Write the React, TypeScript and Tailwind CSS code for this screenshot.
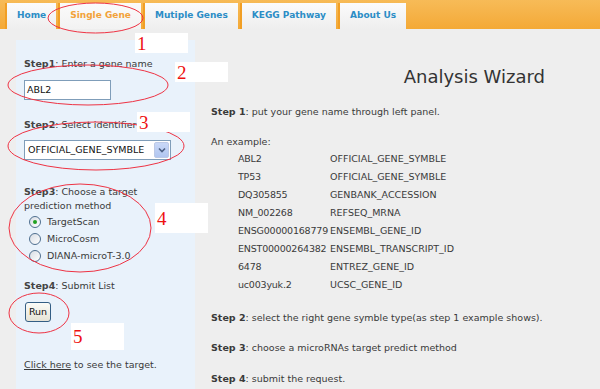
import React from 'react'

const tabs = [
  { label: 'Home', active: false },
  { label: 'Single Gene', active: true },
  { label: 'Mutiple Genes', active: false },
  { label: 'KEGG Pathway', active: false },
  { label: 'About Us', active: false },
]

const examples = [
  ['ABL2', 'OFFICIAL_GENE_SYMBLE'],
  ['TP53', 'OFFICIAL_GENE_SYMBLE'],
  ['DQ305855', 'GENBANK_ACCESSION'],
  ['NM_002268', 'REFSEQ_MRNA'],
  ['ENSG00000168779', 'ENSEMBL_GENE_ID'],
  ['ENST00000264382', 'ENSEMBL_TRANSCRIPT_ID'],
  ['6478', 'ENTREZ_GENE_ID'],
  ['uc003yuk.2', 'UCSC_GENE_ID'],
]

const methods = ['TargetScan', 'MicroCosm', 'DIANA-microT-3.0']

// red annotation numbers on white patches
const marks = [
  { n: '1', cls: 'left-[135px] top-[33px] w-[53px] h-[20px]' },
  { n: '2', cls: 'left-[175px] top-[62px] w-[53px] h-[20px]' },
  { n: '3', cls: 'left-[137px] top-[112px] w-[53px] h-[20px]' },
  { n: '4', cls: 'left-[155px] top-[203px] w-[53px] h-[30px]' },
  { n: '5', cls: 'left-[71px] top-[323px] w-[53px] h-[27px]' },
]

function Radio({ checked }: { checked: boolean }) {
  return (
    <span className="w-[12px] h-[12px] rounded-full border border-[#4f6f8f] bg-gradient-to-br from-[#d8dde4] to-white flex items-center justify-center">
      {checked && <span className="w-[4px] h-[4px] rounded-full bg-[#21a121]" />}
    </span>
  )
}

export default function App() {
  return (
    <div className="relative w-[600px] h-[389px] overflow-hidden bg-[#eeeeee] text-[#3a3a3a] font-['DejaVu_Sans',sans-serif] text-[9.5px]">
      {/* Header tabs */}
      <div className="h-[29px] bg-gradient-to-b from-[#f7bb57] to-[#f4a935] flex items-end pl-[5px] gap-[2px]">
        {tabs.map((t) => (
          <div
            key={t.label}
            className={`h-[26px] px-[10px] flex items-center border-l-2 border-[#f19f25] font-bold text-[9px] ${
              t.active
                ? 'bg-gradient-to-b from-[#fbfbfb] to-[#f2f2f2] text-[#f2a23a]'
                : 'bg-gradient-to-b from-[#fbfbfb] to-[#eeeeee] text-[#2b8dc6]'
            }`}
          >
            {t.label}
          </div>
        ))}
      </div>

      <div className="flex">
        {/* Left panel */}
        <div className="ml-[16px] mt-[11px] w-[179px] h-[349px] bg-[#e9f2fb] pl-[8px] pt-[17px] leading-[14px]">
          <div>
            <b className="text-[#444]">Step1</b>: Enter a gene name
          </div>
          <div className="mt-[9px] w-[87px] h-[20px] bg-white border border-[#7f9db9] flex items-center pl-[2px] text-[#111]">
            ABL2
          </div>
          <div className="mt-[18px]">
            <b className="text-[#444]">Step2</b>: Select identifier
          </div>
          <div className="mt-[8px] w-[147px] h-[20px] bg-white border border-[#7f9db9] flex items-center justify-between pl-[3px] pr-[1px] text-[#111]">
            <span>OFFICIAL_GENE_SYMBLE</span>
            <span className="w-[15px] h-[16px] rounded-[2px] bg-gradient-to-b from-[#c9d8f7] to-[#b1c6f0] border border-[#bcc9e6] flex items-center justify-center">
              <svg width="8" height="6" viewBox="0 0 8 6">
                <path d="M1 1.5 L4 4.5 L7 1.5" fill="none" stroke="#4d6185" strokeWidth="1.6" />
              </svg>
            </span>
          </div>
          <div className="mt-[25px]">
            <b className="text-[#444]">Step3</b>: Choose a target
            <br />
            prediction method
          </div>
          <div className="pl-[5px]">
            {methods.map((m, i) => (
              <div key={m} className="h-[17px] flex items-center gap-[6px]">
                <Radio checked={i === 0} />
                <span>{m}</span>
              </div>
            ))}
          </div>
          <div className="mt-[15px]">
            <b className="text-[#444]">Step4</b>: Submit List
          </div>
          <div className="mt-[9px] w-[26px] h-[20px] ml-px rounded-[3px] border border-[#345e84] bg-gradient-to-b from-[#fbfbf7] to-[#e6e3d6] flex items-center justify-center text-[#111]">
            Run
          </div>
          <div className="mt-[36px]">
            <span className="underline">Click here</span> to see the target.
          </div>
        </div>

        {/* Right content */}
        <div className="flex-1 pl-[16px] leading-[14px]">
          <div className="mt-[38px] pr-[55px] text-right text-[18px] leading-[20px] text-[#333]">
            Analysis Wizard
          </div>
          <div className="mt-[18px]">
            <b>Step 1</b>: put your gene name through left panel.
          </div>
          <div className="mt-[16px]">An example:</div>
          <div className="mt-[1px] pl-[27px]">
            {examples.map(([a, b]) => (
              <div key={a} className="h-[18px] flex items-center">
                <span className="w-[92px] whitespace-nowrap tracking-[-0.2px]">{a}</span>
                <span>{b}</span>
              </div>
            ))}
          </div>
          <div className="mt-[17px]">
            <b>Step 2</b>: select the right gene symble type(as step 1 example shows).
          </div>
          <div className="mt-[16px]">
            <b>Step 3</b>: choose a microRNAs target predict method
          </div>
          <div className="mt-[17px]">
            <b>Step 4</b>: submit the request.
          </div>
        </div>
      </div>

      {/* Annotation ellipses */}
      <svg className="absolute left-0 top-0 pointer-events-none" width="600" height="389">
        <g fill="none" stroke="#ee3344" strokeWidth="1">
          <ellipse cx="95.5" cy="18" rx="47.5" ry="15" />
          <ellipse cx="88" cy="85" rx="80" ry="20" />
          <ellipse cx="96" cy="146" rx="88" ry="24" />
          <ellipse cx="80" cy="228" rx="71" ry="44" />
          <ellipse cx="39" cy="313" rx="30" ry="20" />
        </g>
      </svg>

      {marks.map((m) => (
        <div
          key={m.n}
          className={`absolute bg-white pl-[2px] flex items-center text-[#ee1111] font-['Liberation_Serif',serif] text-[19px] leading-none ${m.cls}`}
        >
          {m.n}
        </div>
      ))}
    </div>
  )
}
